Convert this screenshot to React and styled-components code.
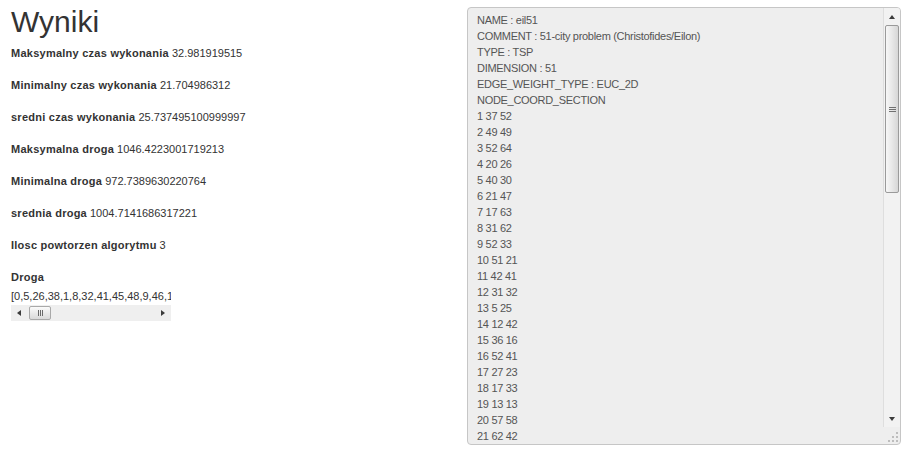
import React from 'react';
import styled, { createGlobalStyle, css } from 'styled-components';

const GlobalStyle = createGlobalStyle`
  html, body {
    margin: 0;
    padding: 0;
    background: #fff;
  }
  body {
    font-family: "Liberation Sans", Arial, Helvetica, sans-serif;
    font-size: 11px;
    color: #333;
  }
`;

const header = [
  'NAME : eil51',
  'COMMENT : 51-city problem (Christofides/Eilon)',
  'TYPE : TSP',
  'DIMENSION : 51',
  'EDGE_WEIGHT_TYPE : EUC_2D',
  'NODE_COORD_SECTION',
];

const coords = [
  [37, 52], [49, 49], [52, 64], [20, 26], [40, 30], [21, 47], [17, 63], [31, 62],
  [52, 33], [51, 21], [42, 41], [31, 32], [5, 25], [12, 42], [36, 16], [52, 41],
  [27, 23], [17, 33], [13, 13], [57, 58], [62, 42], [42, 57], [16, 57], [8, 52],
  [7, 38], [27, 68], [30, 48], [43, 67], [58, 48], [58, 27], [37, 69], [38, 46],
  [46, 10], [61, 33], [62, 63], [63, 69], [32, 22], [45, 35], [59, 15], [5, 6],
  [10, 17], [21, 10], [5, 64], [30, 15], [39, 10], [32, 39], [25, 32], [25, 55],
  [48, 28], [56, 37], [30, 40],
];

const fileText = [
  ...header,
  ...coords.map(([x, y], i) => `${i + 1} ${x} ${y}`),
  'EOF',
].join('\n');

const route = [
  0, 5, 26, 38, 1, 8, 32, 41, 45, 48, 9, 46, 15, 28, 19, 20, 33, 29, 49, 36, 16,
  43, 2, 3, 21, 35, 34, 44, 40, 18, 39, 12, 24, 4, 47, 13, 42, 22, 6, 23, 27, 25,
  7, 30, 10, 14, 37, 31, 50, 11, 17, 0,
];

const stats = [
  ['Maksymalny czas wykonania', '32.981919515'],
  ['Minimalny czas wykonania', '21.704986312'],
  ['sredni czas wykonania', '25.737495100999997'],
  ['Maksymalna droga', '1046.4223001719213'],
  ['Minimalna droga', '972.7389630220764'],
  ['srednia droga', '1004.7141686317221'],
  ['Ilosc powtorzen algorytmu', '3'],
];

const Page = styled.div`
  display: grid;
  grid-template-columns: 1fr 434px;
  column-gap: 24px;
  align-items: start;
  padding: 0 4px 0 11px;
`;

const Results = styled.section`
  display: flex;
  flex-direction: column;
  min-width: 0;
`;

const Title = styled.h1`
  margin: 5px 0 7px;
  font-size: 30px;
  line-height: 33px;
  font-weight: normal;
  color: #333;
`;

const Stat = styled.p`
  margin: 0 0 16px;
  line-height: 16px;
  color: #333;
`;

const Label = styled.b`
  font-weight: bold;
  letter-spacing: 0.25px;
  margin-right: 3px;
`;

const RouteLabel = styled.b`
  display: block;
  font-weight: bold;
  letter-spacing: 0.25px;
  line-height: 16px;
  margin-bottom: 3px;
`;

/* ---------- scrollbar drawing ---------- */

const triangles = {
  up: css`
    border-left: 3.5px solid transparent;
    border-right: 3.5px solid transparent;
    border-bottom: 4px solid #3c3c3c;
  `,
  down: css`
    border-left: 3.5px solid transparent;
    border-right: 3.5px solid transparent;
    border-top: 4px solid #3c3c3c;
  `,
  left: css`
    border-top: 3.5px solid transparent;
    border-bottom: 3.5px solid transparent;
    border-right: 4px solid #3c3c3c;
  `,
  right: css`
    border-top: 3.5px solid transparent;
    border-bottom: 3.5px solid transparent;
    border-left: 4px solid #3c3c3c;
  `,
};

const ArrowButton = styled.div`
  flex: 0 0 ${(p) => p.$size}px;
  display: flex;
  align-items: center;
  justify-content: center;

  &::before {
    content: '';
    width: 0;
    height: 0;
    ${(p) => triangles[p.$dir]}
  }
`;

const Thumb = styled.div`
  box-sizing: border-box;
  display: flex;
  align-items: center;
  justify-content: center;
  border: 1px solid #9a9a9a;
  border-radius: 2px;
  ${(p) =>
    p.$vertical
      ? css`
          height: ${p.$length}px;
          margin: ${p.$offset}px 1px 0;
          background: linear-gradient(to right, #f7f7f7, #e9e9e9 45%, #d6d6d6);
        `
      : css`
          width: ${p.$length}px;
          margin: 1px 0 1px ${p.$offset}px;
          background: linear-gradient(to bottom, #fbfbfb, #e8e8e8 55%, #d9d9d9);
          border-color: #a9a9a9;
        `}
`;

const Grip = styled.span`
  ${(p) =>
    p.$vertical
      ? css`
          width: 7px;
          height: 5px;
          background: repeating-linear-gradient(to bottom, #707070 0 1px, transparent 1px 2px);
        `
      : css`
          width: 5px;
          height: 6px;
          background: repeating-linear-gradient(to right, #6a6a6a 0 1px, transparent 1px 2px);
        `}
`;

const Track = styled.div`
  flex: 1;
  display: flex;
  flex-direction: ${(p) => (p.$vertical ? 'column' : 'row')};
  align-items: stretch;
  min-width: 0;
  min-height: 0;
`;

const Bar = styled.div`
  display: flex;
  flex-direction: ${(p) => (p.$vertical ? 'column' : 'row')};
  background: ${(p) => (p.$vertical ? '#f2f2f2' : '#efefef')};
  ${(p) =>
    p.$vertical
      ? css`
          flex: 1;
          border-left: 1px solid #dedede;
        `
      : css`
          flex: 0 0 16px;
        `}
`;

function ScrollBar({ vertical, length, offset }) {
  const size = vertical ? 17 : 16;
  return (
    <Bar $vertical={vertical}>
      <ArrowButton $size={size} $dir={vertical ? 'up' : 'left'} />
      <Track $vertical={vertical}>
        <Thumb $vertical={vertical} $length={length} $offset={offset}>
          <Grip $vertical={vertical} />
        </Thumb>
      </Track>
      <ArrowButton $size={size} $dir={vertical ? 'down' : 'right'} />
    </Bar>
  );
}

/* ---------- route box ---------- */

const RouteBox = styled.div`
  display: flex;
  flex-direction: column;
  width: 160px;
`;

const RouteText = styled.div`
  overflow: hidden;
  white-space: nowrap;
  line-height: 17px;
  color: #333;
`;

/* ---------- file view ---------- */

const FileFrame = styled.div`
  box-sizing: border-box;
  display: flex;
  width: 434px;
  height: 438px;
  margin-top: 7px;
  border: 1px solid #c6c6c6;
  border-radius: 4px;
  background: #eeeeee;
  overflow: hidden;
`;

const FileText = styled.div`
  flex: 1;
  min-width: 0;
  padding: 4px 9px;
  overflow: hidden;
  white-space: pre;
  font-size: 11px;
  line-height: 16px;
  letter-spacing: -0.3px;
  color: #555;
`;

const SideColumn = styled.div`
  flex: 0 0 17px;
  display: flex;
  flex-direction: column;
`;

const Corner = styled.div`
  flex: 0 0 17px;
  display: flex;
  align-items: flex-end;
  justify-content: flex-end;
`;

function ResizeGrip() {
  const dots = [
    [10, 2], [6, 6], [10, 6], [2, 10], [6, 10], [10, 10],
  ];
  return (
    <svg width="14" height="14" viewBox="0 0 14 14">
      {dots.map(([x, y]) => (
        <rect key={`${x}-${y}`} x={x} y={y} width="2" height="2" fill="#bdbdbd" />
      ))}
    </svg>
  );
}

export default function App() {
  return (
    <>
      <GlobalStyle />
      <Page>
        <Results>
          <Title>Wyniki</Title>
          {stats.map(([label, value]) => (
            <Stat key={label}>
              <Label>{label}</Label>
              {value}
            </Stat>
          ))}
          <RouteLabel>Droga</RouteLabel>
          <RouteBox>
            <RouteText>[{route.join(',')}]</RouteText>
            <ScrollBar length={22} offset={2} />
          </RouteBox>
        </Results>
        <FileFrame>
          <FileText>{fileText}</FileText>
          <SideColumn>
            <ScrollBar vertical length={168} offset={0} />
            <Corner>
              <ResizeGrip />
            </Corner>
          </SideColumn>
        </FileFrame>
      </Page>
    </>
  );
}
